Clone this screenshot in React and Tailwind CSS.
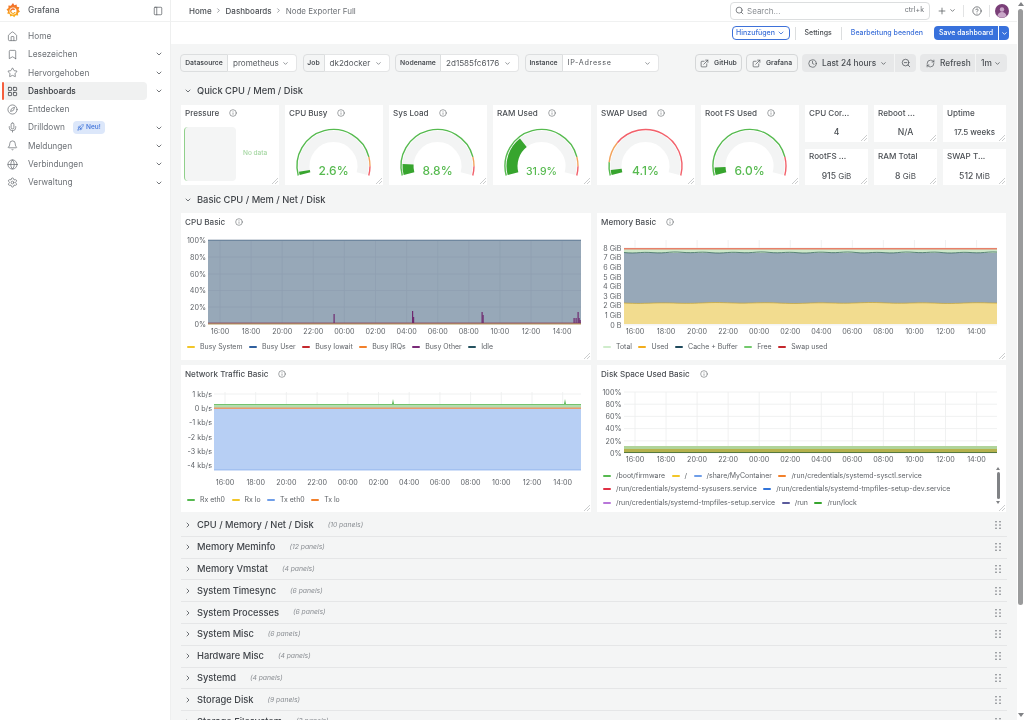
import React from 'react'
import {
  Home, Bookmark, Star, LayoutGrid, Compass, Mic, Bell, Globe, Settings, ChevronDown, ChevronRight,
  PanelLeft, Search, Plus, CircleHelp, Info, ExternalLink, Clock, ZoomOut, RefreshCw, Rocket,
} from 'lucide-react'

const font = 'font-["Inter","Liberation_Sans",sans-serif]'

const navItems = [
  { label: 'Home', icon: Home },
  { label: 'Lesezeichen', icon: Bookmark, more: true },
  { label: 'Hervorgehoben', icon: Star, more: true },
  { label: 'Dashboards', icon: LayoutGrid, more: true, active: true },
  { label: 'Entdecken', icon: Compass },
  { label: 'Drilldown', icon: Mic, more: true, badge: true },
  { label: 'Meldungen', icon: Bell, more: true },
  { label: 'Verbindungen', icon: Globe, more: true },
  { label: 'Verwaltung', icon: Settings, more: true },
]

const rows = [
  ['CPU / Memory / Net / Disk', '10 panels'],
  ['Memory Meminfo', '12 panels'],
  ['Memory Vmstat', '4 panels'],
  ['System Timesync', '6 panels'],
  ['System Processes', '6 panels'],
  ['System Misc', '6 panels'],
  ['Hardware Misc', '4 panels'],
  ['Systemd', '4 panels'],
  ['Storage Disk', '9 panels'],
  ['Storage Filesystem', '3 panels'],
]

const hours = ['16:00', '18:00', '20:00', '22:00', '00:00', '02:00', '04:00', '06:00', '08:00', '10:00', '12:00', '14:00']

function GrafanaLogo() {
  return (
    <svg width="14" height="15" viewBox="0 0 28 30">
      <defs>
        <linearGradient id="gf" x1="0" y1="1" x2="0" y2="0">
          <stop offset="0" stopColor="#fbb81a" />
          <stop offset="1" stopColor="#f1632b" />
        </linearGradient>
      </defs>
      <path
        fill="url(#gf)"
        d="M14 0l2.600 4.600 4.600-1.800 .6 4.900 4.900 1-1.800 4.600 3.100 3.700-4 2.800 .3 5-5-.3-2.800 4-3.600-3.200-4.600 1.800-1-4.900-4.900-1 1.800-4.600L1 13l4-2.900-.2-5 5 .3z"
      />
      <circle cx="14" cy="16" r="7" fill="#fff" />
      <path d="M18.500 12.500a5.800 5.800 0 1 0 1 5.500h-3a3 3 0 1 1-.4-3.300z" fill="url(#gf)" />
    </svg>
  )
}

function Sidebar() {
  return (
    <aside className="w-[171px] shrink-0 bg-white border-r border-[#eeefef] flex flex-col">
      <div className="h-[22px] shrink-0 flex items-center pl-[6px] pr-[7px] border-b border-[#f0f1f1]">
        <GrafanaLogo />
        <span className="ml-[8px] text-[8.3px] text-[#5a5e63] font-medium">Grafana</span>
        <PanelLeft size={10} className="ml-auto text-[#4c5055]" strokeWidth={1.6} />
      </div>
      <nav className="pt-[5px] flex flex-col">
        {navItems.map(item => {
          const Icon = item.icon
          return (
            <div key={item.label} className="relative h-[18.3px] flex items-center pl-[3px] pr-[7px]">
              {item.active && <span className="absolute left-[2px] top-0 bottom-0 w-[2px] bg-[#f55f3e] rounded-sm" />}
              <div className={`w-[144px] h-full flex items-center pl-[4px] rounded-sm ${item.active ? 'bg-[#f0f1f1]' : ''}`}>
                <Icon size={11} strokeWidth={1.6} className={item.active ? 'text-[#33373c]' : 'text-[#6a6e73]'} />
                <span className={`ml-[10px] text-[8.3px] ${item.active ? 'text-[#33373c] font-medium' : 'text-[#6d7176]'}`}>
                  {item.label}
                </span>
                {item.badge && (
                  <span className="ml-[8px] h-[13px] w-[32px] rounded-sm bg-[#dce7fa] text-[#3d71d9] text-[6.5px] font-medium flex items-center justify-center gap-[2px]">
                    <Rocket size={7} strokeWidth={2} />Neu!
                  </span>
                )}
              </div>
              {item.more && <ChevronDown size={8} strokeWidth={2.5} className="ml-auto text-[#5a5e63]" />}
            </div>
          )
        })}
      </nav>
    </aside>
  )
}

function TopBar() {
  return (
    <div className="h-[22px] shrink-0 bg-white border-b border-[#f0f1f1] flex items-center pl-[18px] pr-[8px]">
      <div className="flex items-center text-[8px] text-[#4b4f54] font-medium">
        <span>Home</span>
        <ChevronRight size={7} strokeWidth={2.5} className="mx-[3.5px] text-[#7b7f84]" />
        <span>Dashboards</span>
        <ChevronRight size={7} strokeWidth={2.5} className="mx-[3.5px] text-[#7b7f84]" />
        <span className="font-normal text-[#6d7176]">Node Exporter Full</span>
      </div>
      <div className="ml-auto w-[200px] h-[18px] rounded-sm border border-[#dcdedf] bg-white flex items-center px-[4px]">
        <Search size={9} strokeWidth={2} className="text-[#5a5e63]" />
        <span className="ml-[3px] text-[8px] text-[#8a8e93]">Search...</span>
        <span className="ml-auto mr-[1px] text-[7px] text-[#6d7176]">ctrl+k</span>
      </div>
      <Plus size={10} strokeWidth={1.8} className="ml-[7px] text-[#54585d]" />
      <ChevronDown size={7} strokeWidth={2.5} className="ml-[2px] text-[#54585d]" />
      <span className="ml-[7px] w-px h-[12px] bg-[#e2e3e4]" />
      <CircleHelp size={10} strokeWidth={1.8} className="ml-[8px] text-[#54585d]" />
      <span className="ml-[7px] w-px h-[12px] bg-[#e2e3e4]" />
      <svg width="14" height="14" viewBox="0 0 14 14" className="ml-[5px]">
        <circle cx="7" cy="7" r="7" fill="#7a3f78" />
        <circle cx="7" cy="5.500" r="2.200" fill="#c9a6c8" />
        <path d="M2.500 12c.6-3 2.400-4 4.500-4s3.900 1 4.500 4a7 7 0 0 1-9 0z" fill="#c9a6c8" />
      </svg>
    </div>
  )
}

function ToolBar() {
  return (
    <div className="h-[22px] shrink-0 bg-white flex items-center justify-end pr-[8px] text-[7px] font-medium">
      <span className="h-[14px] w-[58px] rounded-sm border border-[#3d71d9] text-[#3d71d9] flex items-center justify-center gap-[2px]">
        Hinzufügen<ChevronDown size={8} strokeWidth={2.5} />
      </span>
      <span className="ml-[5px] w-px h-[13px] bg-[#dcdedf]" />
      <span className="ml-[9px] text-[#4b4f54]">Settings</span>
      <span className="ml-[9px] w-px h-[13px] bg-[#dcdedf]" />
      <span className="ml-[9px] text-[#3d71d9]">Bearbeitung beenden</span>
      <span className="ml-[11px] h-[14px] w-[64px] bg-[#3871dc] text-white rounded-l-sm flex items-center justify-center">Save dashboard</span>
      <span className="ml-px h-[14px] w-[10px] bg-[#3871dc] text-white rounded-r-sm flex items-center justify-center">
        <ChevronDown size={7} strokeWidth={3} />
      </span>
    </div>
  )
}

function Variable({ label, value, labelW, valueW, tracking }) {
  return (
    <div className="flex h-[18px] text-[8.1px]">
      <span style={{ width: labelW }} className="shrink-0 border border-[#dcdedf] bg-[#f4f5f5] text-[#4b4f54] text-[6.8px] font-semibold rounded-l-sm flex items-center justify-center">
        {label}
      </span>
      <span style={{ width: valueW }} className="shrink-0 border border-l-0 border-[#e4e5e6] bg-white text-[#55595e] rounded-r-sm flex items-center pl-[5px] pr-[7px]">
        <span className={tracking ? 'text-[7.2px] tracking-[0.7px]' : ''}>{value}</span>
        <ChevronDown size={7} strokeWidth={2.5} className="ml-auto text-[#6d7176]" />
      </span>
    </div>
  )
}

function LinkButton({ label, width }) {
  return (
    <span style={{ width }} className="h-[18px] border border-[#d5d7d8] rounded-sm flex items-center justify-center gap-[5px] text-[6.8px] font-semibold text-[#4b4f54]">
      <ExternalLink size={9} strokeWidth={1.8} />{label}
    </span>
  )
}

function VariableBar() {
  return (
    <div className="h-[18px] flex items-center ml-[9px] mr-[6px] mt-[10px]">
      <div className="flex gap-[5.5px]">
        <Variable label="Datasource" value="prometheus" labelW={48} valueW={69} />
        <Variable label="Job" value="dk2docker" labelW={22} valueW={65} />
        <Variable label="Nodename" value="2d1585fc6176" labelW={46} valueW={78} />
        <Variable label="Instance" value="IP-Adresse" labelW={38} valueW={96} tracking />
      </div>
      <div className="ml-auto flex items-center gap-[4px]">
        <LinkButton label="GitHub" width={47} />
        <LinkButton label="Grafana" width={52} />
        <div className="flex h-[18px] gap-px text-[8.3px] text-[#4b4f54] font-medium">
          <span className="w-[92px] bg-[#e7e8e9] rounded-l-sm flex items-center pl-[6px] pr-[7px] whitespace-nowrap">
            <Clock size={9} strokeWidth={1.8} />
            <span className="ml-[5px]">Last 24 hours</span>
            <ChevronDown size={7} strokeWidth={2.5} className="ml-auto" />
          </span>
          <span className="w-[21px] bg-[#e7e8e9] rounded-r-sm flex items-center justify-center">
            <ZoomOut size={10} strokeWidth={1.8} />
          </span>
        </div>
        <div className="flex h-[18px] gap-px text-[8.3px] text-[#4b4f54] font-medium">
          <span className="w-[55px] bg-[#e7e8e9] rounded-l-sm flex items-center pl-[6px]">
            <RefreshCw size={9} strokeWidth={1.8} />
            <span className="ml-[5px]">Refresh</span>
          </span>
          <span className="w-[31px] bg-[#e7e8e9] rounded-r-sm flex items-center pl-[5px] pr-[6px]">
            1m<ChevronDown size={7} strokeWidth={2.5} className="ml-auto" />
          </span>
        </div>
      </div>
    </div>
  )
}

function SectionTitle({ title }) {
  return (
    <div className="h-[20px] pt-[1px] flex items-center ml-[13px]">
      <ChevronDown size={8} strokeWidth={2.5} className="text-[#54585d]" />
      <span className="ml-[5px] text-[9.3px] font-medium text-[#41454a]">{title}</span>
    </div>
  )
}

function ResizeHandle() {
  return (
    <svg width="6" height="6" viewBox="0 0 6 6" className="absolute right-[1px] bottom-[1px]">
      <path d="M0 6L6 0M3 6L6 3" stroke="#b4b7b9" strokeWidth="0.7" />
    </svg>
  )
}

function PanelTitle({ title, info = true }) {
  return (
    <div className="flex items-center h-[16px] text-[8.1px] font-medium text-[#4b4f54] whitespace-nowrap">
      <span>{title}</span>
      {info && <Info size={8} strokeWidth={1.6} className="ml-[10px] text-[#54585d]" />}
    </div>
  )
}

function arc(cx, cy, r, t0, t1) {
  const point = t => {
    const a = ((-15 + 210 * t) * Math.PI) / 180
    return [cx - r * Math.cos(a), cy - r * Math.sin(a)]
  }
  const [x0, y0] = point(t0)
  const [x1, y1] = point(t1)
  const large = (t1 - t0) * 210 > 180 ? 1 : 0
  return `M${x0} ${y0}A${r} ${r} 0 ${large} 1 ${x1} ${y1}`
}

function Gauge({ title, value, text, stops }) {
  const cx = 48.5
  const cy = 44
  return (
    <div className="relative bg-white px-[4px] h-[80px]">
      <PanelTitle title={title} />
      <svg width="98" height="63" viewBox="0 0 98 63" className="absolute left-0 top-[17px]">
        <path d={arc(cx, cy, 29.5, 0, 1)} fill="none" stroke="#f3f4f4" strokeWidth="11" />
        <path d={arc(cx, cy, 29.5, 0, value)} fill="none" stroke="#37a52e" strokeWidth="11" />
        {stops.map(([from, to, color]) => (
          <path key={from} d={arc(cx, cy, 36.5, from, to)} fill="none" stroke={color} strokeWidth="1.4" />
        ))}
        <text x={cx} y={52.5} textAnchor="middle" fontFamily="Inter" fontSize={value > 0.3 ? 10.5 : 12} fontWeight="500" fill="#57ba50">{text}</text>
      </svg>
      <ResizeHandle />
    </div>
  )
}

function Stat({ title, value, unit, small }) {
  return (
    <div className="relative bg-white flex-1 px-[4px]">
      <PanelTitle title={title} info={false} />
      <div className={`text-center font-medium text-[#4b4f54] mt-[5px] leading-[12px] whitespace-nowrap ${small ? 'text-[8px]' : 'text-[8.6px]'}`}>
        {value}{unit && <span className="text-[8px] font-normal"> {unit}</span>}
      </div>
      <ResizeHandle />
    </div>
  )
}

const normalStops = [[0, 0.86, '#56ba4f'], [0.86, 0.93, '#f2a35c'], [0.93, 1, '#f2616b']]

function QuickRow() {
  return (
    <div className="ml-[10px] mr-[7px] grid grid-cols-[98px_98px_98px_98px_98px_98px_1fr] gap-x-[6px]">
      <div className="relative bg-white px-[4px] h-[80px]">
        <PanelTitle title="Pressure" />
        <div className="flex items-center mt-[6px]">
          <div className="w-[52px] h-[54px] ml-[-1px] bg-[#f4f5f5] border-l border-[#90d08b] rounded-sm" />
          <span className="ml-[7px] text-[6.5px] text-[#a3d6a0] font-medium">No data</span>
        </div>
        <ResizeHandle />
      </div>
      <Gauge title="CPU Busy" value={0.026} text="2.6%" stops={normalStops} />
      <Gauge title="Sys Load" value={0.088} text="8.8%" stops={normalStops} />
      <Gauge title="RAM Used" value={0.319} text="31.9%" stops={normalStops} />
      <Gauge title="SWAP Used" value={0.041} text="4.1%" stops={[[0, 0.1, '#56ba4f'], [0.1, 0.26, '#f2a35c'], [0.26, 1, '#f2616b']]} />
      <Gauge title="Root FS Used" value={0.06} text="6.0%" stops={[[0, 0.86, '#56ba4f'], [0.86, 1, '#f2616b']]} />
      <div className="grid grid-cols-3 grid-rows-2 gap-x-[6px] gap-y-[7px] h-[80px]">
        <Stat title="CPU Cor..." value="4" />
        <Stat title="Reboot ..." value="N/A" />
        <Stat title="Uptime" value="17.5 weeks" small />
        <Stat title="RootFS ..." value="915" unit="GiB" />
        <Stat title="RAM Total" value="8" unit="GiB" />
        <Stat title="SWAP T..." value="512" unit="MiB" />
      </div>
    </div>
  )
}

// plot frame shared by the four time series: grid lines plus axis labels
function Axes({ x0, x1, top, bottom, yLabels, labelX, timeStart, timeStep, timeY, gridColor = '#eceded' }) {
  return (
    <>
      {yLabels.map(([text, y]) => <line key={text} x1={x0} x2={x1} y1={y} y2={y} stroke={gridColor} strokeWidth="0.8" />)}
      {hours.map((h, i) => (
        <line key={h} x1={timeStart + i * timeStep} x2={timeStart + i * timeStep} y1={top} y2={bottom} stroke={gridColor} strokeWidth="0.8" />
      ))}
      {yLabels.map(([text, y]) => (
        <text key={text} x={labelX} y={y + 2.8} textAnchor="end" fontFamily="Inter" fontSize="7.2" fill="#5f6368">{text}</text>
      ))}
      {hours.map((h, i) => (
        <text key={h} x={timeStart + i * timeStep} y={timeY} textAnchor="middle" fontFamily="Inter" fontSize="7.2" fill="#5f6368">{h}</text>
      ))}
    </>
  )
}

function Legend({ items, className = '' }) {
  return (
    <div className={`flex flex-wrap gap-x-[6.5px] text-[6.95px] text-[#5f6368] leading-[13.4px] ${className}`}>
      {items.map(([label, color]) => (
        <span key={label} className="flex items-center gap-[5px] whitespace-nowrap">
          <span style={{ background: color }} className="w-[8px] h-[2px] rounded-full" />
          {label}
        </span>
      ))}
    </div>
  )
}

function CpuChart() {
  const spikes = [[153, 9], [231.5, 12], [232.5, 6], [301, 11], [302, 8], [393, 5], [395, 5], [397, 11], [398, 5], [399, 3]]
  const hor = [['100%', 5], ['80%', 22], ['60%', 39], ['40%', 55.5], ['20%', 72], ['0%', 89]]
  return (
    <svg width="410" height="103" viewBox="0 0 410 103" className="block">
      <rect x="27" y="5" width="373" height="84" fill="#97a8b8" />
      <Axes x0={27} x1={400} top={5} bottom={89} yLabels={hor} labelX={25} timeStart={39} timeStep={31.1} timeY={99} gridColor="#8fa0b1" />
      <line x1="27" x2="400" y1="5.5" y2="5.5" stroke="#6f879f" strokeWidth="1" />
      <rect x="27" y="87.5" width="373" height="1.5" fill="#8b5a73" />
      {spikes.map(([sx, h], i) => <rect key={i} x={sx - 0.5} y={88 - h} width="1.2" height={h} fill="#6f2a6f" />)}
      <line x1="27" x2="400" y1="89" y2="89" stroke="#e3b74a" strokeWidth="0.7" />
    </svg>
  )
}

function wobble(count, seed, amp) {
  const out = []
  for (let i = 0; i <= count; i++) {
    out.push(Math.sin(i * seed) * amp + Math.sin(i * seed * 0.37) * amp * 0.6)
  }
  return out
}

function MemoryChart() {
  const yl = ['8 GiB', '7 GiB', '6 GiB', '5 GiB', '4 GiB', '3 GiB', '2 GiB', '1 GiB', '0 B']
  const hor = yl.map((t, i) => [t, 13 + i * 9.6])
  const step = 373 / 90
  const cache = wobble(90, 0.9, 0.35).map((d, i) => `${27 + i * step} ${17.5 + d}`)
  const used = wobble(90, 0.5, 0.3).map((d, i) => `${27 + i * step} ${68 + d}`)
  return (
    <svg width="409" height="103" viewBox="0 0 409 103" className="block">
      <Axes x0={27} x1={400} top={5} bottom={89} yLabels={hor} labelX={24.5} timeStart={38} timeStep={31.05} timeY={99} />
      <rect x="27" y="13" width="373" height="76" fill="#f2dc8f" />
      <polygon points={`${cache.join(' ')} ${[...used].reverse().join(' ')}`} fill="#97a8b8" />
      <rect x="27" y="14" width="373" height="4" fill="#cde8c9" />
      <polyline points={cache.join(' ')} fill="none" stroke="#3a6a5f" strokeWidth="0.8" />
      <polyline points={used.join(' ')} fill="none" stroke="#c9a530" strokeWidth="0.7" />
      <rect x="27" y="13" width="373" height="1.5" fill="#e8806a" />
    </svg>
  )
}

function NetworkChart() {
  const hor = [['1 kb/s', 7], ['0 b/s', 21], ['-1 kb/s', 35], ['-2 kb/s', 50], ['-3 kb/s', 64], ['-4 kb/s', 78]]
  return (
    <svg width="410" height="103" viewBox="0 0 410 103" className="block">
      <Axes x0={33} x1={400} top={5} bottom={83} yLabels={hor} labelX={31} timeStart={44} timeStep={30.7} timeY={97.5} />
      <rect x="33" y="21" width="367" height="62" fill="#b7cff4" />
      <line x1="33" x2="400" y1="83" y2="83" stroke="#7ea6ea" strokeWidth="0.7" />
      <rect x="33" y="17" width="367" height="4" fill="#b3ddaf" />
      <line x1="33" x2="400" y1="17.5" y2="17.5" stroke="#74c26d" strokeWidth="1" />
      <rect x="33" y="20.5" width="367" height="1.5" fill="#ec9a6c" />
      <path d="M211 17L212 12L213 17zM383 17L384 12L385 17z" fill="#5fb858" />
    </svg>
  )
}

function DiskChart() {
  const hor = [['100%', 5], ['80%', 17.2], ['60%', 29.4], ['40%', 41.6], ['20%', 53.8], ['0%', 66]]
  return (
    <svg width="409" height="78" viewBox="0 0 409 78" className="block">
      <Axes x0={27} x1={400} top={5} bottom={66} yLabels={hor} labelX={24.5} timeStart={38} timeStep={31.05} timeY={74.5} />
      <rect x="27" y="59" width="373" height="7" fill="#b0d49a" />
      <rect x="27" y="62" width="373" height="3" fill="#b5b24d" />
      <rect x="27" y="65" width="373" height="1" fill="#55793f" />
    </svg>
  )
}

function ChartPanel({ title, children }) {
  return (
    <div className="relative bg-white h-[147px] px-[4px] pt-[1px] overflow-hidden">
      <PanelTitle title={title} />
      <div className="ml-[-4px] mt-[5px]">{children}</div>
      <ResizeHandle />
    </div>
  )
}

function BasicGrid() {
  return (
    <div className="ml-[10px] mr-[6px] grid grid-cols-[410px_409px] gap-x-[6px] gap-y-[5px]">
      <ChartPanel title="CPU Basic">
        <CpuChart />
        <Legend className="pl-[6px] pt-[2px]" items={[['Busy System', '#f2c629'], ['Busy User', '#2f5f9e'], ['Busy Iowait', '#c4282d'], ['Busy IRQs', '#f2802b'], ['Busy Other', '#7a2a78'], ['Idle', '#24525f']]} />
      </ChartPanel>
      <ChartPanel title="Memory Basic">
        <MemoryChart />
        <Legend className="pl-[6px] pt-[2px]" items={[['Total', '#cfeccb'], ['Used', '#f2ad1c'], ['Cache + Buffer', '#1f4a5c'], ['Free', '#73c96c'], ['Swap used', '#c4282d']]} />
      </ChartPanel>
      <ChartPanel title="Network Traffic Basic">
        <NetworkChart />
        <Legend className="pl-[6px] pt-[3px]" items={[['Rx eth0', '#56b950'], ['Rx lo', '#f2c629'], ['Tx eth0', '#6f9ee8'], ['Tx lo', '#f2802b']]} />
      </ChartPanel>
      <ChartPanel title="Disk Space Used Basic">
        <DiskChart />
        <div className="flex">
          <Legend
            className="pl-[6px] pt-[4px] w-[399px]"
            items={[
              ['/boot/firmware', '#56b950'], ['/', '#f2c629'], ['/share/MyContainer', '#6f9ee8'],
              ['/run/credentials/systemd-sysctl.service', '#f2802b'], ['/run/credentials/systemd-sysusers.service', '#e02f44'],
              ['/run/credentials/systemd-tmpfiles-setup-dev.service', '#3274d9'], ['/run/credentials/systemd-tmpfiles-setup.service', '#b877d9'],
              ['/run', '#5a5a9c'], ['/run/lock', '#37a52e'],
            ]}
          />
          <div className="w-[4px] mt-[2px] flex flex-col items-center">
            <span className="h-0 w-0 border-x-[2px] border-x-transparent border-b-[3px] border-b-[#808285]" />
            <span className="w-[3px] h-[27px] mt-[2px] rounded-full bg-[#808285]" />
            <span className="h-0 w-0 mt-[2px] border-x-[2px] border-x-transparent border-t-[3px] border-t-[#808285]" />
          </div>
        </div>
      </ChartPanel>
    </div>
  )
}

function DragHandle() {
  return (
    <svg width="6" height="8" viewBox="0 0 6 8" className="ml-auto mr-[6px]">
      {[0.8, 4, 7.2].map(y => [1, 5].map(x => <circle key={`${x}${y}`} cx={x} cy={y} r="0.8" fill="#6d7176" />))}
    </svg>
  )
}

function CollapsedRows() {
  return (
    <div className="ml-[10px] mr-[6px] mt-[3px]">
      {rows.map(([title, count]) => (
        <div key={title} className="h-[21.8px] flex items-center pl-[3px] border-b border-[#e5e6e7]">
          <ChevronRight size={8} strokeWidth={2.5} className="text-[#54585d]" />
          <span className="ml-[5px] text-[9.3px] font-medium text-[#41454a]">{title}</span>
          <span className="ml-[14px] text-[6.8px] italic text-[#8a8e93]">({count})</span>
          <DragHandle />
        </div>
      ))}
    </div>
  )
}

function PageScrollbar() {
  return (
    <div className="w-[7px] shrink-0 bg-white flex flex-col items-center pt-[2px] pb-[3px]">
      <span className="h-0 w-0 border-x-[3px] border-x-transparent border-b-[4px] border-b-[#808285]" />
      <span className="w-[5px] h-[596px] mt-[3px] rounded-full bg-[#9a9b9c]" />
      <span className="mt-auto h-0 w-0 border-x-[3px] border-x-transparent border-t-[4px] border-t-[#808285]" />
    </div>
  )
}

export default function App() {
  return (
    <div className={`w-[1024px] h-[720px] overflow-hidden flex bg-[#f4f5f5] blur-[0.3px] ${font}`}>
      <Sidebar />
      <div className="flex-1 min-w-0 flex flex-col">
        <TopBar />
        <ToolBar />
        <div className="flex-1 overflow-hidden pr-[4px]">
          <VariableBar />
          <div className="mt-[8px]"><SectionTitle title="Quick CPU / Mem / Disk" /></div>
          <div className="mt-[5px]"><QuickRow /></div>
          <div className="mt-[4px]"><SectionTitle title="Basic CPU / Mem / Net / Disk" /></div>
          <div className="mt-[4px]"><BasicGrid /></div>
          <CollapsedRows />
        </div>
      </div>
      <PageScrollbar />
    </div>
  )
}
